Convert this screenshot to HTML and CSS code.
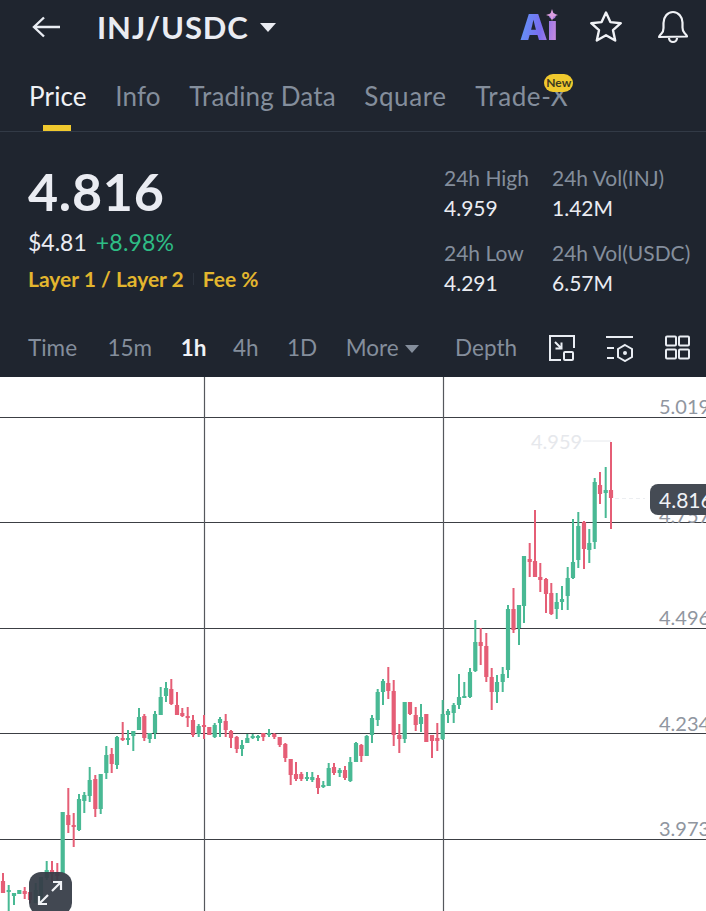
FILE: index.html
```html
<!DOCTYPE html>
<html lang="en">
<head>
  <meta charset="UTF-8">
  <title>INJ/USDC</title>
  <link rel="stylesheet" href="styles.css">
</head>
<body>

  <div class="dark">
    <div class="topbar">
      <svg class="back" width="32" height="24" viewBox="0 0 32 24"><path d="M29 12H3M13 2.500L3 12l10 9.500" fill="none" stroke="#e9edf3" stroke-width="2.400"/></svg>
      <span class="pair">INJ/USDC</span>
      <span class="caret"></span>
      <span class="spacer"></span>
      <span class="ai">Ai<svg class="spark" width="12" height="12" viewBox="0 0 12 12"><path d="M6 0l1.500 4.500L12 6 7.500 7.500 6 12 4.500 7.500 0 6l4.500-1.500z" fill="#dc9fe0"/></svg></span>
      <svg class="star" width="36" height="36" viewBox="0 0 36 36"><path d="M18 3.500l4.400 9.600 10.400 1.100-7.800 7 2.200 10.300L18 26.200l-9.200 5.300L11 21.200l-7.800-7 10.400-1.100z" fill="none" stroke="#f0f2f6" stroke-width="2.400" stroke-linejoin="round"/></svg>
      <svg class="bell" width="34" height="36" viewBox="0 0 34 36"><path d="M3 28c0-1 1-2 2.500-3.500 1.500-1.500 2-3 2-5.500v-5C7.500 8 11.500 3 17 3s9.500 5 9.500 10.500v5c0 2.500.5 4 2 5.500 1.500 1.500 2.500 2.500 2.500 3.500zM13 29c0 2.500 2 4 4 4s4-1.500 4-4" fill="none" stroke="#f0f2f6" stroke-width="2.200" stroke-linejoin="round"/></svg>
    </div>

    <div class="tabs">
      <span class="tab active">Price</span>
      <span class="tab">Info</span>
      <span class="tab">Trading Data</span>
      <span class="tab wide">Square</span>
      <span class="tab wide">Trade-X<span class="new">New</span></span>
    </div>

    <div class="summary">
      <div class="left">
        <div class="price">4.816</div>
        <div class="fiat">$4.81<span class="up">+8.98%</span></div>
        <div class="tags"><span>Layer 1 / Layer 2</span><i class="sep"></i><span>Fee %</span></div>
      </div>
      <div class="stats">
        <div><label>24h High</label><b>4.959</b></div>
        <div><label>24h Vol(INJ)</label><b>1.42M</b></div>
        <div><label>24h Low</label><b>4.291</b></div>
        <div><label>24h Vol(USDC)</label><b>6.57M</b></div>
      </div>
    </div>

    <div class="intervals">
      <span class="iv first">Time</span>
      <span class="iv">15m</span>
      <span class="iv on">1h</span>
      <span class="iv">4h</span>
      <span class="iv">1D</span>
      <span class="iv more">More<i class="caret small"></i></span>
      <span class="iv depth">Depth</span>
      <svg class="tool" width="28" height="28" viewBox="0 0 28 28" fill="none" stroke="#e9edf3" stroke-width="2"><path d="M13 26H2V2H26V14"/><path d="M7 8l6 6M13.500 8.500V14.500H7.500"/><rect x="16" y="18" width="9" height="8" rx="1"/></svg>
      <svg class="tool" width="30" height="28" viewBox="0 0 30 28" fill="none" stroke="#e9edf3" stroke-width="2"><path d="M1 3H28M2 14H9M2 24H9"/><path d="M20 11l7 4v8l-7 4-7-4v-8z"/><circle cx="20" cy="19" r="2" fill="#e9edf3" stroke="none"/></svg>
      <svg class="tool" width="28" height="28" viewBox="0 0 28 28" fill="none" stroke="#e9edf3" stroke-width="2"><rect x="2" y="2.500" width="10" height="9" rx="1"/><rect x="15" y="2.500" width="10" height="9" rx="1"/><rect x="2" y="15.500" width="10" height="9" rx="1"/><rect x="15" y="15.500" width="10" height="9" rx="1"/></svg>
    </div>
  </div>

  <div class="chart">
    <svg id="candles" class="plot" width="706" height="534" viewBox="0 377 706 534"></svg>
    <span class="axis a1">5.019</span>
    <span class="axis a2">4.757</span>
    <span class="axis a3">4.496</span>
    <span class="axis a4">4.234</span>
    <span class="axis a5">3.973</span>
    <span class="high">4.959</span>
    <span class="last">4.816</span>
    <span class="expand">
      <svg width="30" height="30" viewBox="0 0 30 30" fill="none" stroke="#f0f2f6" stroke-width="2.200"><path d="M17 13L26 4M18 4h8v8M13 17l-9 9M4 18v8h8"/></svg>
    </span>
  </div>

  <script src="chart.js"></script>

</body>
</html>
```

FILE: styles.css
```css
* {
  box-sizing: border-box;
}

body {
  font-family: 'Lato', 'Liberation Sans', sans-serif;
  margin: 0;
  width: 706px;
  height: 911px;
  overflow: hidden;
  background-color: #fff;
}

.dark {
  background-color: #1f252f;
  height: 377px;
  color: #848e9c;
}

.topbar {
  display: flex;
  align-items: center;
  height: 54px;
  padding: 0 16px 0 31px;
}

.pair {
  font-size: 31px;
  line-height: 52px;
  font-weight: 700;
  letter-spacing: 0.9px;
  color: #eaecf2;
  margin-left: 34px;
}

.caret {
  width: 0;
  height: 0;
  border-left: 8px solid transparent;
  border-right: 8px solid transparent;
  border-top: 9px solid #eaecf2;
  margin-left: 11px;
}

.caret.small {
  display: inline-block;
  border-left-width: 7.500px;
  border-right-width: 7.500px;
  border-top: 8px solid #848e9c;
  margin-left: 6px;
  vertical-align: 3px;
}

.spacer {
  flex: 1;
}

.ai {
  position: relative;
  font-family: 'Inter', sans-serif;
  font-size: 35px;
  font-weight: 900;
  letter-spacing: -0.5px;
  color: #6f8cf5;
  background: linear-gradient(100deg, #5c9cf8, #7a6cf0 55%, #d48fdc);
  -webkit-background-clip: text;
  background-clip: text;
  -webkit-text-fill-color: transparent;
  margin-right: 31px;
}

.spark {
  position: absolute;
  right: -1px;
  top: 3px;
}

.star {
  margin-right: 32px;
}

.tabs {
  display: flex;
  gap: 28.600px;
  height: 78px;
  padding: 26px 0 0 29px;
  font-size: 26px;
  letter-spacing: 0.15px;
  border-bottom: 1px solid #323a46;
}

.tab {
  position: relative;
  height: 51px;
}

.tab.wide {
  letter-spacing: 0.6px;
}

.tab.active {
  color: #f0f2f6;
}

.tab.active::after {
  content: "";
  position: absolute;
  left: 14px;
  bottom: 0;
  width: 28px;
  height: 6px;
  background-color: #f0c92e;
}

.new {
  position: absolute;
  right: -5px;
  top: -6px;
  width: 29px;
  font-size: 12px;
  line-height: 18px;
  font-weight: 700;
  letter-spacing: 0;
  text-align: center;
  color: #3d3a20;
  background-color: #f0c92e;
  border-radius: 9px;
}

.summary {
  display: flex;
  justify-content: space-between;
  height: 190px;
  padding: 31px 12px 0 28px;
}

.left {
  margin-top: -3px;
}

.price {
  font-size: 52px;
  line-height: 62px;
  font-weight: 700;
  letter-spacing: 0.7px;
  color: #eaecf2;
}

.fiat {
  margin-top: 6px;
  font-size: 23px;
  line-height: 28px;
  color: #eaecf2;
}

.up {
  margin-left: 9px;
  letter-spacing: 0.2px;
  color: #2ebd85;
}

.tags {
  display: flex;
  align-items: center;
  gap: 9px;
  margin-top: 9px;
  font-size: 21px;
  line-height: 28px;
  font-weight: 700;
  color: #e3b62e;
}

.sep {
  width: 1px;
  height: 12px;
  background-color: #2c333e;
}

.stats {
  display: grid;
  grid-template-columns: 108px 142px;
  align-content: start;
  row-gap: 15px;
  font-size: 21px;
  line-height: 30px;
  white-space: nowrap;
}

.stats label,
.stats b {
  display: block;
}

.stats b {
  font-weight: 400;
  color: #eaecf2;
}

.intervals {
  display: flex;
  align-items: center;
  height: 51px;
  padding-left: 28px;
  font-size: 22.500px;
  white-space: nowrap;
}

.iv {
  flex-shrink: 0;
  margin-right: 28.500px;
}

.iv.first {
  margin-right: 30.500px;
}

.iv.on {
  color: #f0f2f6;
  font-weight: 700;
  margin-right: 26.500px;
}

.iv.more {
  margin-right: 36.500px;
}

.iv.depth {
  margin-right: 31px;
}

.tool {
  flex-shrink: 0;
  margin-right: 29px;
}

.chart {
  position: relative;
  height: 534px;
  overflow: hidden;
}

.plot {
  display: block;
}

.axis {
  position: absolute;
  left: 659px;
  font-size: 20px;
  line-height: 24px;
  color: #9096a0;
}

.a1 { top: 17px; }
.a2 { top: 126px; }
.a3 { top: 228px; }
.a4 { top: 334px; }
.a5 { top: 439px; }

.high {
  position: absolute;
  left: 531px;
  top: 52px;
  font-size: 20px;
  line-height: 24px;
  color: #e6e8ec;
}

.last {
  position: absolute;
  left: 650px;
  top: 107px;
  width: 70px;
  height: 31px;
  padding-left: 9px;
  font-size: 21px;
  line-height: 31px;
  color: #f0f2f6;
  background-color: #454b54;
  border-radius: 8px;
}

.expand {
  position: absolute;
  left: 29px;
  top: 495px;
  width: 43px;
  height: 43px;
  padding: 6px;
  background-color: rgba(54, 61, 71, 0.94);
  border-radius: 12px;
}
```

FILE: chart.js
```js
// x, wick top, wick bottom, body top, body bottom (all in page pixels)
const up = [
  [8.7,885,911,890,892],[14,893,905,893,896],[19.3,890,894,890,894],[35.7,883,903,890,903],[41,877,903,877,903],[46.7,861,880,870,878],
  [62.7,812,873,812,873],[79,794,831,799,830],[84.3,792,813,795,801],[89.7,767,802,780,796],[100.7,774,814,774,809],
  [106.3,746,779,755,773],[117,736,769,737,765],[128,730,745,738,739],[133.3,731,751,731,736],[139,708,730,717,730],
  [149.7,733,743,733,739],[155,711,739,714,733],[160.7,687,715,697,715],[166,682,702,688,696],[198.7,724,737,726,734],
  [214.7,723,738,725,737],[220,717,737,719,723],[242,740,756,745,749],[247.3,734,743,738,743],[252.7,734,739,736,738],
  [258,735,741,736,738],[269,729,737,733,735],[307,772,781,777,779],[312.3,772,782,777,780],[323.3,781,788,785,787],
  [328.7,763,786,768,786],[339.7,768,777,770,773],[350.3,757,782,762,781],[356,742,762,743,762],[366.7,735,756,736,756],
  [372,715,743,718,735],[377.7,689,726,692,720],[383,679,705,681,692],[404.7,702,743,702,739],[421,704,732,717,724],
  [442.7,700,740,714,739],[448,709,723,711,715],[453.7,703,723,705,713],[459,674,709,697,705],[464.3,682,698,696,697],
  [470,668,698,672,697],[475.3,620,672,642,671],[497,675,703,682,692],[502.7,667,692,674,682],[508,605,678,609,670],
  [519,605,645,605,628],[524,556,623,556,606],
  [556.7,593,619,602,609],[562,586,610,599,602],[567.7,567,610,578,596],[573,519,579,562,578],[578.3,512,568,526,560],
  [589.3,529,563,543,550],[594.7,478,549,482,542],[605.7,467,518,490,493]
];
const down = [
  [3,873,893,881,893],[24.7,887,899,891,894],[30,892,903,892,900],[52,861,882,870,874],[57.3,863,880,872,876],
  [68.3,788,833,815,825],[73.7,813,847,825,827],[95.3,775,817,779,809],[111.7,748,773,754,764],[122.7,722,741,738,740],
  [144.3,714,741,716,738],[171.3,679,705,689,704],[177,692,715,705,715],[182.3,708,717,713,716],[187.7,707,727,716,718],
  [193,715,737,720,735],[204,715,739,725,727],[209.3,727,735,727,735],[225.7,714,737,721,730],[231,730,748,731,738],
  [236.7,736,753,737,749],[263.3,733,741,733,737],[274.3,733,739,734,737],[279.7,737,747,737,745],[285.3,743,762,744,758],
  [290.7,759,785,759,775],[296,762,781,774,779],[301.3,772,781,774,779],[318,775,794,778,788],[334,763,775,767,773],
  [345,766,780,770,778],[361.3,744,762,745,756],[388.3,667,699,683,691],[393.7,680,746,691,735],[399.3,724,753,735,739],
  [410,702,715,702,714],[415.7,707,731,715,725],[426.3,714,742,714,742],[432,735,758,735,741],[437.3,723,751,738,741],
  [480.7,628,665,642,646],[486.3,633,682,646,677],[491.7,668,710,677,692],
  [513.5,588,633,609,630],[529.7,543,577,559,562],[535,510,577,561,577],[540.3,563,592,577,580],[546,578,613,579,594],
  [551.3,583,615,593,614],[584,521,569,522,549],[600,472,504,485,494],[611,442,529,490,498]
];

const svg = document.getElementById('candles');
let out = '';

// grid first, the candles sit on top of it
[417, 522, 628, 733, 839].forEach(y => {
  out += `<path d="M0 ${y}.5H706" stroke="#3c3f44" stroke-width="1.200"/>`;
});
[204, 443].forEach(x => {
  out += `<path d="M${x}.5 377V911" stroke="#55585d" stroke-width="1.200"/>`;
});

function candle(c, color) {
  const [x, wt, wb, bt, bb] = c;
  out += `<rect x="${x - 1}" y="${wt}" width="2" height="${wb - wt}" fill="${color}"/>`;
  out += `<rect x="${x - 2.1}" y="${bt}" width="4.200" height="${Math.max(bb - bt, 2)}" fill="${color}"/>`;
}
up.forEach(c => candle(c, '#49b994'));
down.forEach(c => candle(c, '#e55e76'));

// leader lines for the high and last price labels
out += '<path d="M583 441H611" stroke="#e6e8ec"/>';
out += '<path d="M615 498.500H645" stroke="#eceef1" stroke-dasharray="4 3"/>';
svg.innerHTML = out;
```
